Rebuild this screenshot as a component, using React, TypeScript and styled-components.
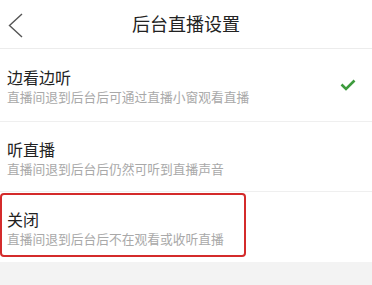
import React from "react";
import styled, { createGlobalStyle } from "styled-components";

const Global = createGlobalStyle`
  html, body { margin: 0; padding: 0; background: #f3f3f3; }
  body { font-family: "Noto Sans CJK SC", "Noto Sans", sans-serif; }
  * { box-sizing: border-box; }
`;

const Page = styled.div`
  width: 372px;
  height: 285px;
  background: #f3f3f3;
  overflow: hidden;
  display: flex;
  flex-direction: column;
`;

const Header = styled.div`
  position: relative;
  height: 49px;
  background: #fff;
  border-bottom: 1px solid #ececec;
  display: flex;
  align-items: center;
  justify-content: center;
`;

const BackButton = styled.div`
  position: absolute;
  left: 8px;
  top: 13px;
  width: 16px;
  height: 26px;
  display: flex;
`;

const Title = styled.div`
  font-size: 18px;
  line-height: 24px;
  color: #222;
  margin-top: -2px;
`;

const List = styled.div`
  background: #fff;
  display: flex;
  flex-direction: column;
`;

const Row = styled.div<{ $last?: boolean; $top: number; $bottom: number }>`
  position: relative;
  display: flex;
  align-items: center;
  padding: ${(p) => p.$top}px 16px ${(p) => p.$bottom}px 7px;
  border-bottom: ${(p) => (p.$last ? "none" : "1px solid #efefef")};
`;

const Texts = styled.div`
  flex: 1;
  display: flex;
  flex-direction: column;
  gap: 2px;
`;

const RowTitle = styled.div`
  font-size: 16px;
  line-height: 20px;
  color: #222;
`;

const RowSub = styled.div`
  font-size: 12.75px;
  line-height: 16px;
  color: #a9a9a9;
`;

const Check = styled.div`
  width: 16px;
  height: 12px;
  display: flex;
  margin-top: -2px;
`;

const Highlight = styled.div`
  position: absolute;
  left: 0px;
  top: 1px;
  width: 246px;
  height: 64px;
  border: 2.5px solid #d42b2b;
  border-radius: 4px;
  pointer-events: none;
`;

const items = [
  { title: "边看边听", sub: "直播间退到后台后可通过直播小窗观看直播", checked: true, top: 18, bottom: 16 },
  { title: "听直播", sub: "直播间退到后台后仍然可听到直播声音", checked: false, top: 17, bottom: 14 },
  { title: "关闭", sub: "直播间退到后台后不在观看或收听直播", checked: false, highlight: true, top: 17, bottom: 15 },
];

export default function App() {
  return (
    <>
      <Global />
      <Page>
        <Header>
          <BackButton>
            <svg width="16" height="26" viewBox="0 0 16 26">
              <polyline points="14,1 1.5,12.5 14,24" fill="none" stroke="#555" strokeWidth="1.4" />
            </svg>
          </BackButton>
          <Title>后台直播设置</Title>
        </Header>
        <List>
          {items.map((it, i) => (
            <Row key={it.title} $last={i === items.length - 1} $top={it.top} $bottom={it.bottom}>
              <Texts>
                <RowTitle>{it.title}</RowTitle>
                <RowSub>{it.sub}</RowSub>
              </Texts>
              {it.checked && (
                <Check>
                  <svg width="16" height="12" viewBox="0 0 16 12">
                    <polyline points="1.5,5.5 6,10 14.5,1.5" fill="none" stroke="#3d9b3d" strokeWidth="2.6" />
                  </svg>
                </Check>
              )}
              {it.highlight && <Highlight />}
            </Row>
          ))}
        </List>
      </Page>
    </>
  );
}
